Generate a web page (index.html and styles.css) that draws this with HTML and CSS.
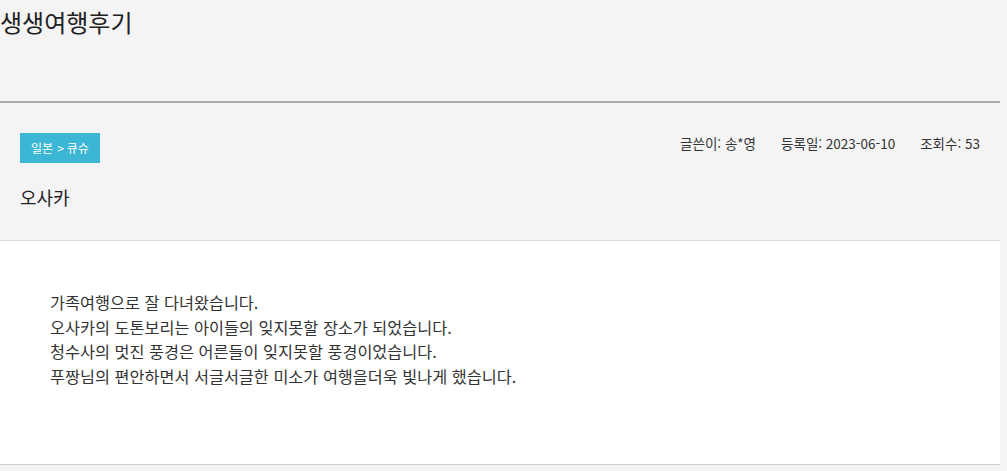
FILE: index.html
```html
<!DOCTYPE html>
<html lang="ko">
<head>
    <meta charset="UTF-8">
    <meta name="viewport" content="width=device-width, initial-scale=1.0">
    <title>생생여행후기</title>
    <link rel="stylesheet" href="styles.css">
</head>
<body>

    <div class="wrap">
        <header class="page-head">
            <h1>생생여행후기</h1>
        </header>

        <section class="post-info">
            <div class="info-top">
                <span class="badge">일본<span class="sep">&gt;</span>큐슈</span>
                <ul class="meta">
                    <li>글쓴이: 송*영</li>
                    <li>등록일: 2023-06-10</li>
                    <li>조회수: 53</li>
                </ul>
            </div>
            <h2 class="post-title">오사카</h2>
        </section>

        <section class="post-body">
            <p>
                가족여행으로 잘 다녀왔습니다.<br>
                오사카의 도톤보리는 아이들의 잊지못할 장소가 되었습니다.<br>
                청수사의 멋진 풍경은 어른들이 잊지못할 풍경이었습니다.<br>
                푸짱님의 편안하면서 서글서글한 미소가 여행을더욱 빛나게 했습니다.
            </p>
        </section>
    </div>

</body>
</html>
```

FILE: styles.css
```css
body {
    margin: 0;
    padding: 0;
    background-color: #f4f4f4;
    font-family: "Noto Sans CJK KR", "Noto Sans", sans-serif;
    color: #222;
}

.wrap {
    width: 1000px;
}

.page-head {
    height: 101px;
    border-bottom: 2px solid #a9a9a9;
}

.page-head h1 {
    margin: 0;
    padding-top: 4px;
    font-size: 24px;
    font-weight: normal;
    line-height: 36px;
    color: #222;
}

.post-info {
    padding: 30px 20px 0;
    height: 107px;
    border-bottom: 1px solid #dedede;
}

.info-top {
    display: flex;
    justify-content: space-between;
    align-items: flex-start;
}

.badge {
    display: inline-block;
    width: 80px;
    height: 30px;
    line-height: 30px;
    text-align: center;
    background-color: #3bb6d5;
    color: #fff;
    font-size: 12px;
}

.badge .sep {
    margin: 0 3px 0 4px;
}

.meta {
    display: flex;
    gap: 25px;
    margin: 0;
    padding: 0;
    list-style: none;
    font-size: 13.5px;
    line-height: 20px;
    color: #333;
}

.post-title {
    margin: 19px 0 0;
    font-size: 18px;
    font-weight: normal;
    line-height: 30px;
    color: #222;
}

.post-body {
    background-color: #fff;
    height: 223px;
    padding: 0 50px;
    border-bottom: 1px solid #cfcfcf;
}

.post-body p {
    margin: 0;
    padding-top: 49px;
    font-size: 16.3px;
    line-height: 24.6px;
    color: #333;
}
```
